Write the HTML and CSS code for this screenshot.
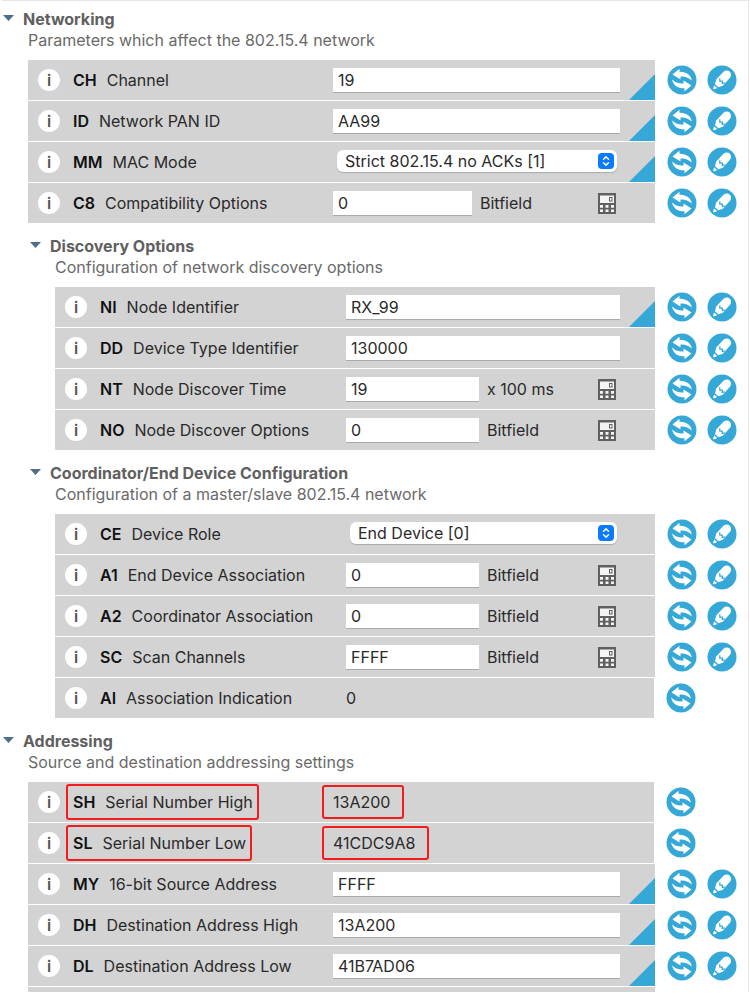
FILE: index.html
```html
<!DOCTYPE html>
<html lang="en">
<head>
<meta charset="utf-8">
<title>Radio configuration</title>
<link rel="stylesheet" href="styles.css">
</head>
<body>
<svg class="sprite" aria-hidden="true">
  <symbol id="refresh" viewBox="0 0 30 30">
    <circle cx="15" cy="15" r="14.5" fill="#35a8d8"/>
    <path d="M12.500 3.800L5.500 9.600L13.500 14.600V11.600C17.500 11.200 21 12.200 24.800 15.600C24.200 10.200 19.500 6.600 12.500 6.800Z" fill="#fff"/>
    <path d="M17.500 26.200L24.500 20.400L16.500 15.400V18.400C12.500 18.800 9 17.800 5.200 14.400C5.800 19.800 10.500 23.400 17.500 23.200Z" fill="#fff"/>
  </symbol>
  <symbol id="write" viewBox="0 0 30 30">
    <circle cx="15" cy="15" r="14.5" fill="#35a8d8"/>
    <path d="M16.500 6.800C18.500 5 21 5 22.600 6.500C24.400 8.200 24.400 10.600 23.200 12.600L15.800 20.800L11.400 22.300L8 19.200L9.200 14.600Z" fill="#fff"/>
    <path d="M7.200 20.400L10.200 23L7.600 24.200C6.600 24.500 6 23.800 6.200 22.900Z" fill="#fff"/>
    <path d="M12.800 13.200V16.200H15.300V18.400L17.800 17.800" fill="none" stroke="#35a8d8" stroke-width="1.200"/>
  </symbol>
  <symbol id="calc" viewBox="0 0 18 21">
    <rect width="18" height="21" fill="#606060"/>
    <path d="M2 2.500H16V10H2ZM2 12H5V14.700H2ZM7.500 12H10.500V14.700H7.500ZM13 12H16V14.700H13ZM2 16.400H5V19H2ZM7.500 16.400H10.500V19H7.500ZM13 16.400H16V19H13Z" fill="#f4f4f4"/>
    <rect x="11.500" y="4.500" width="2.500" height="3.500" fill="none" stroke="#606060"/>
  </symbol>
  <symbol id="chevrons" viewBox="0 0 16 16">
    <rect width="16" height="16" rx="4" fill="#0a7aff"/>
    <path d="M5.500 6.300L8 3.900L10.500 6.300M5.500 9.700L8 12.100L10.500 9.700" fill="none" stroke="#fff" stroke-width="1.500" stroke-linecap="round" stroke-linejoin="round"/>
  </symbol>
</svg>
<main class="page">
  <section class="group">
    <h2 class="title"><button class="toggle" aria-label="Collapse Networking"></button>Networking</h2>
    <p class="desc">Parameters which affect the 802.15.4 network</p>
    <div class="rows">
      <div class="row"><div class="param"><button class="info">i</button><label class="name" for="ch"><b>CH</b>Channel</label><div class="field"><input class="text" id="ch" value="19"></div><span class="flag"></span></div><div class="actions"><button class="act" aria-label="Read"><svg><use href="#refresh"/></svg></button><button class="act" aria-label="Write"><svg><use href="#write"/></svg></button></div></div>
      <div class="row"><div class="param"><button class="info">i</button><label class="name" for="id"><b>ID</b>Network PAN ID</label><div class="field"><input class="text" id="id" value="AA99"></div><span class="flag"></span></div><div class="actions"><button class="act" aria-label="Read"><svg><use href="#refresh"/></svg></button><button class="act" aria-label="Write"><svg><use href="#write"/></svg></button></div></div>
      <div class="row"><div class="param"><button class="info">i</button><label class="name" for="mm"><b>MM</b>MAC Mode</label><div class="field"><div class="picker"><select id="mm"><option>Strict 802.15.4 no ACKs [1]</option></select><svg><use href="#chevrons"/></svg></div></div><span class="flag"></span></div><div class="actions"><button class="act" aria-label="Read"><svg><use href="#refresh"/></svg></button><button class="act" aria-label="Write"><svg><use href="#write"/></svg></button></div></div>
      <div class="row"><div class="param"><button class="info">i</button><label class="name" for="c8"><b>C8</b>Compatibility Options</label><div class="field"><input class="text short" id="c8" value="0"><span class="unit">Bitfield</span><button class="calc" aria-label="Calculator"><svg><use href="#calc"/></svg></button></div></div><div class="actions"><button class="act" aria-label="Read"><svg><use href="#refresh"/></svg></button><button class="act" aria-label="Write"><svg><use href="#write"/></svg></button></div></div>
    </div>
  </section>

  <section class="group nested">
    <h3 class="title"><button class="toggle" aria-label="Collapse Discovery Options"></button>Discovery Options</h3>
    <p class="desc">Configuration of network discovery options</p>
    <div class="rows">
      <div class="row"><div class="param"><button class="info">i</button><label class="name" for="ni"><b>NI</b>Node Identifier</label><div class="field"><input class="text" id="ni" value="RX_99"></div><span class="flag"></span></div><div class="actions"><button class="act" aria-label="Read"><svg><use href="#refresh"/></svg></button><button class="act" aria-label="Write"><svg><use href="#write"/></svg></button></div></div>
      <div class="row"><div class="param"><button class="info">i</button><label class="name" for="dd"><b>DD</b>Device Type Identifier</label><div class="field"><input class="text" id="dd" value="130000"></div></div><div class="actions"><button class="act" aria-label="Read"><svg><use href="#refresh"/></svg></button><button class="act" aria-label="Write"><svg><use href="#write"/></svg></button></div></div>
      <div class="row"><div class="param"><button class="info">i</button><label class="name" for="nt"><b>NT</b>Node Discover Time</label><div class="field"><input class="text short" id="nt" value="19"><span class="unit">x 100 ms</span><button class="calc" aria-label="Calculator"><svg><use href="#calc"/></svg></button></div></div><div class="actions"><button class="act" aria-label="Read"><svg><use href="#refresh"/></svg></button><button class="act" aria-label="Write"><svg><use href="#write"/></svg></button></div></div>
      <div class="row"><div class="param"><button class="info">i</button><label class="name" for="no"><b>NO</b>Node Discover Options</label><div class="field"><input class="text short" id="no" value="0"><span class="unit">Bitfield</span><button class="calc" aria-label="Calculator"><svg><use href="#calc"/></svg></button></div></div><div class="actions"><button class="act" aria-label="Read"><svg><use href="#refresh"/></svg></button><button class="act" aria-label="Write"><svg><use href="#write"/></svg></button></div></div>
    </div>
  </section>

  <section class="group nested">
    <h3 class="title"><button class="toggle" aria-label="Collapse Coordinator/End Device Configuration"></button>Coordinator/End Device Configuration</h3>
    <p class="desc">Configuration of a master/slave 802.15.4 network</p>
    <div class="rows">
      <div class="row"><div class="param"><button class="info">i</button><label class="name" for="ce"><b>CE</b>Device Role</label><div class="field"><div class="picker"><select id="ce"><option>End Device [0]</option></select><svg><use href="#chevrons"/></svg></div></div></div><div class="actions"><button class="act" aria-label="Read"><svg><use href="#refresh"/></svg></button><button class="act" aria-label="Write"><svg><use href="#write"/></svg></button></div></div>
      <div class="row"><div class="param"><button class="info">i</button><label class="name" for="a1"><b>A1</b>End Device Association</label><div class="field"><input class="text short" id="a1" value="0"><span class="unit">Bitfield</span><button class="calc" aria-label="Calculator"><svg><use href="#calc"/></svg></button></div></div><div class="actions"><button class="act" aria-label="Read"><svg><use href="#refresh"/></svg></button><button class="act" aria-label="Write"><svg><use href="#write"/></svg></button></div></div>
      <div class="row"><div class="param"><button class="info">i</button><label class="name" for="a2"><b>A2</b>Coordinator Association</label><div class="field"><input class="text short" id="a2" value="0"><span class="unit">Bitfield</span><button class="calc" aria-label="Calculator"><svg><use href="#calc"/></svg></button></div></div><div class="actions"><button class="act" aria-label="Read"><svg><use href="#refresh"/></svg></button><button class="act" aria-label="Write"><svg><use href="#write"/></svg></button></div></div>
      <div class="row"><div class="param"><button class="info">i</button><label class="name" for="sc"><b>SC</b>Scan Channels</label><div class="field"><input class="text short" id="sc" value="FFFF"><span class="unit">Bitfield</span><button class="calc" aria-label="Calculator"><svg><use href="#calc"/></svg></button></div></div><div class="actions"><button class="act" aria-label="Read"><svg><use href="#refresh"/></svg></button><button class="act" aria-label="Write"><svg><use href="#write"/></svg></button></div></div>
      <div class="row readonly"><div class="param"><button class="info">i</button><span class="name"><b>AI</b>Association Indication</span><div class="field"><output class="value">0</output></div></div><div class="actions"><button class="act" aria-label="Read"><svg><use href="#refresh"/></svg></button></div></div>
    </div>
  </section>

  <section class="group">
    <h2 class="title"><button class="toggle" aria-label="Collapse Addressing"></button>Addressing</h2>
    <p class="desc">Source and destination addressing settings</p>
    <div class="rows">
      <div class="row readonly"><div class="param"><button class="info">i</button><span class="name marked"><b>SH</b>Serial Number High</span><div class="field"><output class="value marked">13A200</output></div></div><div class="actions"><button class="act" aria-label="Read"><svg><use href="#refresh"/></svg></button></div></div>
      <div class="row readonly"><div class="param"><button class="info">i</button><span class="name marked"><b>SL</b>Serial Number Low</span><div class="field"><output class="value marked">41CDC9A8</output></div></div><div class="actions"><button class="act" aria-label="Read"><svg><use href="#refresh"/></svg></button></div></div>
      <div class="row"><div class="param"><button class="info">i</button><label class="name" for="my"><b>MY</b>16-bit Source Address</label><div class="field"><input class="text" id="my" value="FFFF"></div><span class="flag"></span></div><div class="actions"><button class="act" aria-label="Read"><svg><use href="#refresh"/></svg></button><button class="act" aria-label="Write"><svg><use href="#write"/></svg></button></div></div>
      <div class="row"><div class="param"><button class="info">i</button><label class="name" for="dh"><b>DH</b>Destination Address High</label><div class="field"><input class="text" id="dh" value="13A200"></div><span class="flag"></span></div><div class="actions"><button class="act" aria-label="Read"><svg><use href="#refresh"/></svg></button><button class="act" aria-label="Write"><svg><use href="#write"/></svg></button></div></div>
      <div class="row"><div class="param"><button class="info">i</button><label class="name" for="dl"><b>DL</b>Destination Address Low</label><div class="field"><input class="text" id="dl" value="41B7AD06"></div><span class="flag"></span></div><div class="actions"><button class="act" aria-label="Read"><svg><use href="#refresh"/></svg></button><button class="act" aria-label="Write"><svg><use href="#write"/></svg></button></div></div>
      <div class="row partial"><div class="param"></div><div class="actions"></div></div>
    </div>
  </section>
</main>
</body>
</html>
```
FILE: styles.css
```css
* { box-sizing: border-box; }
body { margin: 0; background: #fff; }
body, button, input, select {
  font-family: Inter, "Liberation Sans", sans-serif;
  font-size: 16px;
  line-height: 20px;
  color: #2a2a2a;
}
button { border: 0; padding: 0; background: none; }
.sprite { display: none; }
.page {
  margin: 0 1px 0 2px;
  border: solid #e6e6e6;
  border-width: 1px 1px 0 0;
  padding-top: 7px;
}

.group { --field: 287px; --short: 139px; padding-left: 26px; margin-bottom: 12px; }
.nested { --field: 274px; --short: 133px; padding-left: 53px; }
.title {
  display: flex;
  align-items: center;
  gap: 9px;
  margin: 0 0 0 -25px;
  font-size: 16px;
  font-weight: 700;
  line-height: 22px;
  color: #606060;
}
.toggle {
  width: 11px;
  height: 6px;
  margin-bottom: 2px;
  background: #4d6f8c;
  clip-path: polygon(0 0, 100% 0, 50% 100%);
}
.desc { margin: 0 0 10px; color: #6a6a6a; }

.rows { display: flex; flex-direction: column; gap: 1px; }
.row { display: flex; }
.param {
  flex: 1;
  position: relative;
  display: flex;
  align-items: center;
  height: 40px;
  padding: 0 35px 0 10px;
  background: #d3d3d3;
}
.partial .param { height: 5px; }
.info {
  width: 22px;
  height: 22px;
  margin-right: 13px;
  border-radius: 50%;
  background: #fff;
  font-weight: 600;
  color: #555;
}
.name { display: flex; gap: 10px; white-space: nowrap; }
.name b { font-weight: 600; color: #111; }
.field { display: flex; align-items: center; width: var(--field); margin-left: auto; }
.text {
  flex: 1;
  min-width: 0;
  height: 25px;
  padding: 1px 5px 0;
  border: 0;
  border-bottom: 1px solid #aaa;
  border-radius: 0;
  background: #fff;
}
.short { flex: 0 0 var(--short); }
.unit { margin-left: 8px; }
.calc { width: 18px; height: 21px; margin: 0 4px 0 auto; }
.calc svg, .act svg { display: block; width: 100%; height: 100%; }
.picker { position: relative; flex: 1; height: 24px; margin: 0 3px 0 4px; }
.picker select {
  appearance: none;
  width: 100%;
  height: 22px;
  padding: 0 24px 0 8px;
  border: 0;
  border-radius: 6px;
  background: #fff;
  box-shadow: 0 1px 1px #aaa;
}
.picker svg { position: absolute; top: 3px; right: 3px; width: 16px; height: 16px; pointer-events: none; }
.flag {
  position: absolute;
  right: 0;
  bottom: 0;
  width: 26px;
  height: 26px;
  background: #35a8d8;
  clip-path: polygon(100% 0, 100% 100%, 0 100%);
}
.value { padding-left: 1px; }
.marked { border: 2px solid #f31b1b; border-radius: 3px; }
.name.marked { margin-left: -7px; padding: 6px 4px 6px 5px; }
.value.marked { margin-left: -10px; padding: 5px 12px 5px 9px; }

.actions { display: flex; align-items: center; gap: 10px; width: 93px; padding-left: 12px; }
.readonly .actions { width: 94px; }
.act { width: 30px; height: 30px; }
```
